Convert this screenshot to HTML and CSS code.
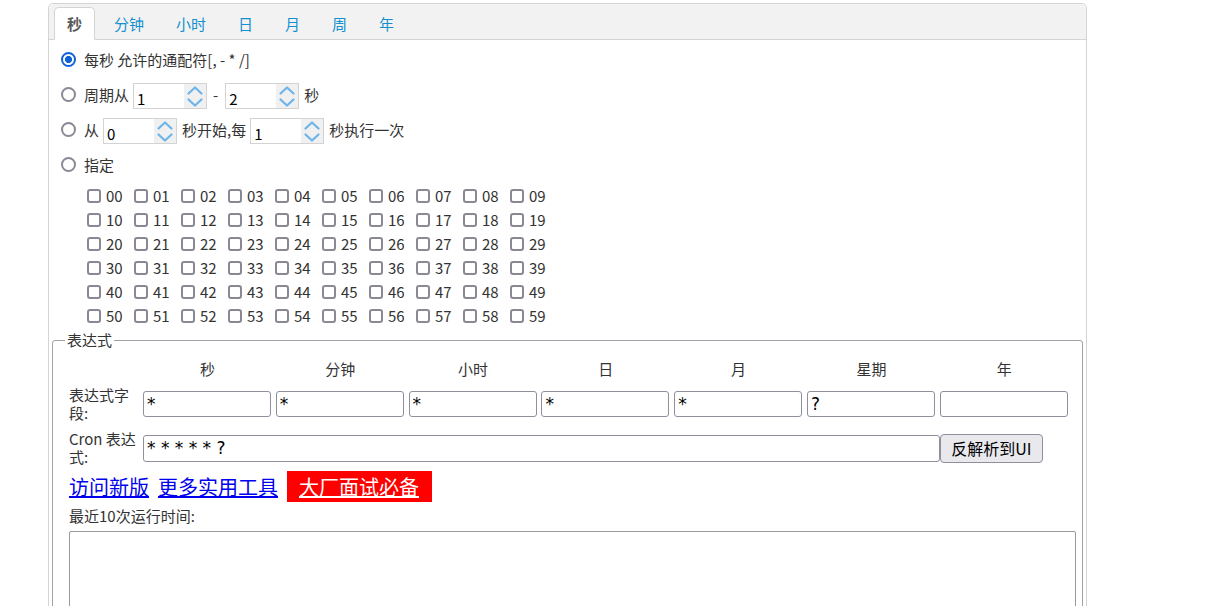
FILE: index.html
```html
<!DOCTYPE html>
<html lang="zh">
<head>
<meta charset="utf-8">
<title>Cron</title>
<link rel="stylesheet" href="styles.css">
</head>
<body>
<div class="panel">
  <div class="tabs">
    <div class="tab sel">秒</div>
    <div class="tab">分钟</div>
    <div class="tab">小时</div>
    <div class="tab">日</div>
    <div class="tab">月</div>
    <div class="tab">周</div>
    <div class="tab">年</div>
  </div>
  <div class="content">
    <div class="row"><input type="radio" name="s" checked><span class="lbl">每秒 允许的通配符[, - * /]</span></div>
    <div class="row"><input type="radio" name="s"><span class="lbl">周期从</span>
      <span class="spin"><input class="num" value="1"><span class="arr"><svg viewBox="0 0 22 24" width="22" height="24"><path d="M4.5 9.5 L11 3.5 L17.5 9.5 M4.5 15.5 L11 21.5 L17.5 15.5"/></svg></span></span>
      <span class="dash">-</span>
      <span class="spin"><input class="num" value="2"><span class="arr"><svg viewBox="0 0 22 24" width="22" height="24"><path d="M4.5 9.5 L11 3.5 L17.5 9.5 M4.5 15.5 L11 21.5 L17.5 15.5"/></svg></span></span>
      <span class="txt">秒</span>
    </div>
    <div class="row"><input type="radio" name="s"><span class="lbl">从</span>
      <span class="spin"><input class="num" value="0"><span class="arr"><svg viewBox="0 0 22 24" width="22" height="24"><path d="M4.5 9.5 L11 3.5 L17.5 9.5 M4.5 15.5 L11 21.5 L17.5 15.5"/></svg></span></span>
      <span class="txt">秒开始,每</span>
      <span class="spin"><input class="num" value="1"><span class="arr"><svg viewBox="0 0 22 24" width="22" height="24"><path d="M4.5 9.5 L11 3.5 L17.5 9.5 M4.5 15.5 L11 21.5 L17.5 15.5"/></svg></span></span>
      <span class="txt">秒执行一次</span>
    </div>
    <div class="row"><input type="radio" name="s"><span class="lbl">指定</span></div>
    <div class="grid">
      <label class="cb"><input type="checkbox">00</label><label class="cb"><input type="checkbox">01</label><label class="cb"><input type="checkbox">02</label><label class="cb"><input type="checkbox">03</label><label class="cb"><input type="checkbox">04</label><label class="cb"><input type="checkbox">05</label><label class="cb"><input type="checkbox">06</label><label class="cb"><input type="checkbox">07</label><label class="cb"><input type="checkbox">08</label><label class="cb"><input type="checkbox">09</label>
      <label class="cb"><input type="checkbox">10</label><label class="cb"><input type="checkbox">11</label><label class="cb"><input type="checkbox">12</label><label class="cb"><input type="checkbox">13</label><label class="cb"><input type="checkbox">14</label><label class="cb"><input type="checkbox">15</label><label class="cb"><input type="checkbox">16</label><label class="cb"><input type="checkbox">17</label><label class="cb"><input type="checkbox">18</label><label class="cb"><input type="checkbox">19</label>
      <label class="cb"><input type="checkbox">20</label><label class="cb"><input type="checkbox">21</label><label class="cb"><input type="checkbox">22</label><label class="cb"><input type="checkbox">23</label><label class="cb"><input type="checkbox">24</label><label class="cb"><input type="checkbox">25</label><label class="cb"><input type="checkbox">26</label><label class="cb"><input type="checkbox">27</label><label class="cb"><input type="checkbox">28</label><label class="cb"><input type="checkbox">29</label>
      <label class="cb"><input type="checkbox">30</label><label class="cb"><input type="checkbox">31</label><label class="cb"><input type="checkbox">32</label><label class="cb"><input type="checkbox">33</label><label class="cb"><input type="checkbox">34</label><label class="cb"><input type="checkbox">35</label><label class="cb"><input type="checkbox">36</label><label class="cb"><input type="checkbox">37</label><label class="cb"><input type="checkbox">38</label><label class="cb"><input type="checkbox">39</label>
      <label class="cb"><input type="checkbox">40</label><label class="cb"><input type="checkbox">41</label><label class="cb"><input type="checkbox">42</label><label class="cb"><input type="checkbox">43</label><label class="cb"><input type="checkbox">44</label><label class="cb"><input type="checkbox">45</label><label class="cb"><input type="checkbox">46</label><label class="cb"><input type="checkbox">47</label><label class="cb"><input type="checkbox">48</label><label class="cb"><input type="checkbox">49</label>
      <label class="cb"><input type="checkbox">50</label><label class="cb"><input type="checkbox">51</label><label class="cb"><input type="checkbox">52</label><label class="cb"><input type="checkbox">53</label><label class="cb"><input type="checkbox">54</label><label class="cb"><input type="checkbox">55</label><label class="cb"><input type="checkbox">56</label><label class="cb"><input type="checkbox">57</label><label class="cb"><input type="checkbox">58</label><label class="cb"><input type="checkbox">59</label>
    </div>
    <fieldset class="fs">
      <legend>表达式</legend>
      <div class="expr">
        <div></div>
        <div class="hd">秒</div><div class="hd">分钟</div><div class="hd">小时</div><div class="hd">日</div><div class="hd">月</div><div class="hd">星期</div><div class="hd">年</div>
        <div class="rl">表达式字段:</div>
        <div class="fc"><input class="fi" value="*"></div>
        <div class="fc"><input class="fi" value="*"></div>
        <div class="fc"><input class="fi" value="*"></div>
        <div class="fc"><input class="fi" value="*"></div>
        <div class="fc"><input class="fi" value="*"></div>
        <div class="fc"><input class="fi" value="?"></div>
        <div class="fc"><input class="fi" value=""></div>
        <div class="rl">Cron 表达式:</div>
        <div class="fc cron"><input class="ci" value="* * * * * ?"></div>
        <div class="fc"><button class="btn">反解析到UI</button></div>
      </div>
      <div class="links">
        <a href="#" class="lk">访问新版</a>
        <a href="#" class="lk">更多实用工具</a>
        <a href="#" class="lk red">大厂面试必备</a>
      </div>
      <div class="recent">最近10次运行时间:</div>
      <textarea class="ta"></textarea>
    </fieldset>
  </div>
</div>
</body>
</html>
```
FILE: styles.css
```css
html, body {
  margin: 0;
  padding: 0;
  overflow: hidden;
  background: #fff;
}
body {
  font-family: "Noto Sans CJK SC", "Microsoft YaHei", sans-serif;
  font-size: 15px;
  line-height: 18px;
  color: #333;
}
.panel {
  margin: 3px 0 0 48px;
  width: 1039px;
  height: 720px;
  box-sizing: border-box;
  border: 1px solid #d4d4d4;
  border-radius: 5px 5px 0 0;
}
.tabs {
  height: 35px;
  background: #f2f2f2;
  border-bottom: 1px solid #d4d4d4;
  border-radius: 5px 5px 0 0;
  display: flex;
  align-items: flex-end;
  gap: 6px;
  padding-left: 5px;
}
.tab {
  height: 31px;
  line-height: 31px;
  margin-bottom: -1px;
  padding: 0 12px;
  border: 1px solid transparent;
  border-bottom: 1px solid transparent;
  border-radius: 5px 5px 0 0;
  color: #1390cf;
  font-size: 15px;
}
.tab.sel {
  background: #fff;
  border-color: #d4d4d4;
  border-bottom-color: #fff;
  color: #5a5a5a;
  font-weight: bold;
}
.content {
  padding-top: 2px;
}
.row {
  height: 35px;
  display: flex;
  align-items: center;
  padding-left: 12px;
}
.row input[type=radio] {
  appearance: none;
  -webkit-appearance: none;
  margin: 0;
  width: 15px;
  height: 15px;
  box-sizing: border-box;
  border: 2px solid #8b8896;
  border-radius: 50%;
  background: #fff;
}
.row input[type=radio]:checked {
  border-color: #1062d6;
  background: radial-gradient(circle, #1062d6 0 3.3px, #fff 3.8px);
}
.lbl {
  margin-left: 8px;
  margin-right: 4px;
}
.spin {
  display: inline-flex;
  width: 74px;
  height: 26px;
  box-sizing: border-box;
  border: 1px solid #d3d3d3;
  margin-top: 2px;
}
.num {
  flex: 1;
  min-width: 0;
  width: 0;
  border: 0;
  outline: none;
  padding: 5px 0 0 3px;
  font-family: "Noto Sans CJK SC", sans-serif;
  font-size: 15px;
  color: #000;
  background: #fff;
}
.arr {
  width: 22px;
  background: #f0f0f0;
  display: flex;
}
.arr svg path {
  fill: none;
  stroke: #6cb4ea;
  stroke-width: 2.2;
  stroke-linecap: round;
  stroke-linejoin: round;
}
.dash {
  margin: 0 7px 0 6px;
}
.txt {
  margin: 0 4px 0 5px;
}
.grid {
  display: grid;
  grid-template-columns: repeat(10, 47px);
  grid-auto-rows: 24px;
  margin: 2px 0 0 38px;
}
.cb {
  display: flex;
  align-items: center;
}
.cb input {
  appearance: none;
  -webkit-appearance: none;
  margin: 0 5px 0 0;
  width: 14px;
  height: 14px;
  box-sizing: border-box;
  border: 2px solid #8b8896;
  border-radius: 3px;
  background: #fff;
}
.fs {
  margin: 3px 3px 0 3px;
  padding: 0 12px;
  border: 1px solid #a0a0a8;
  border-radius: 3px;
  min-width: 0;
}
.fs legend {
  padding: 0 2px;
  line-height: 18px;
}
.expr {
  display: grid;
  grid-template-columns: 76px repeat(7, 132.8px);
  row-gap: 8px;
  margin-top: 11px;
  align-items: center;
}
.hd {
  text-align: center;
}
.rl {
  padding-left: 4px;
  width: 68px;
}
.fc {
  padding-left: 2px;
}
.fi, .ci {
  box-sizing: border-box;
  height: 26px;
  border: 1px solid #8f8f9d;
  border-radius: 3px;
  padding: 0 3px;
  font-family: "DejaVu Sans", sans-serif;
  font-size: 17px;
  color: #000;
  outline: none;
}
.fi {
  width: 128px;
}
.cron {
  grid-column: 2 / 8;
}
.ci {
  width: 797px;
  height: 27px;
}
.btn {
  width: 103px;
  height: 29px;
  box-sizing: border-box;
  border: 1px solid #8f8f9d;
  border-radius: 4px;
  background: #e9e9ed;
  font-family: "Noto Sans CJK SC", sans-serif;
  font-size: 16px;
  color: #000;
  padding: 0 4px;
}
.links {
  display: flex;
  align-items: center;
  height: 31px;
  margin-top: 5px;
  padding-left: 4px;
}
.lk {
  font-size: 20px;
  line-height: 27px;
  color: #0000ee;
  margin-right: 9px;
}
.red {
  background: #ff0000;
  color: #fff;
  padding: 2px 13px 2px 12px;
}
.recent {
  margin-top: 5px;
  padding-left: 4px;
}
.ta {
  display: block;
  margin: 6px 0 0 4px;
  width: 1007px;
  height: 140px;
  box-sizing: border-box;
  border: 1px solid #999;
  border-radius: 2px;
  resize: none;
}
```
